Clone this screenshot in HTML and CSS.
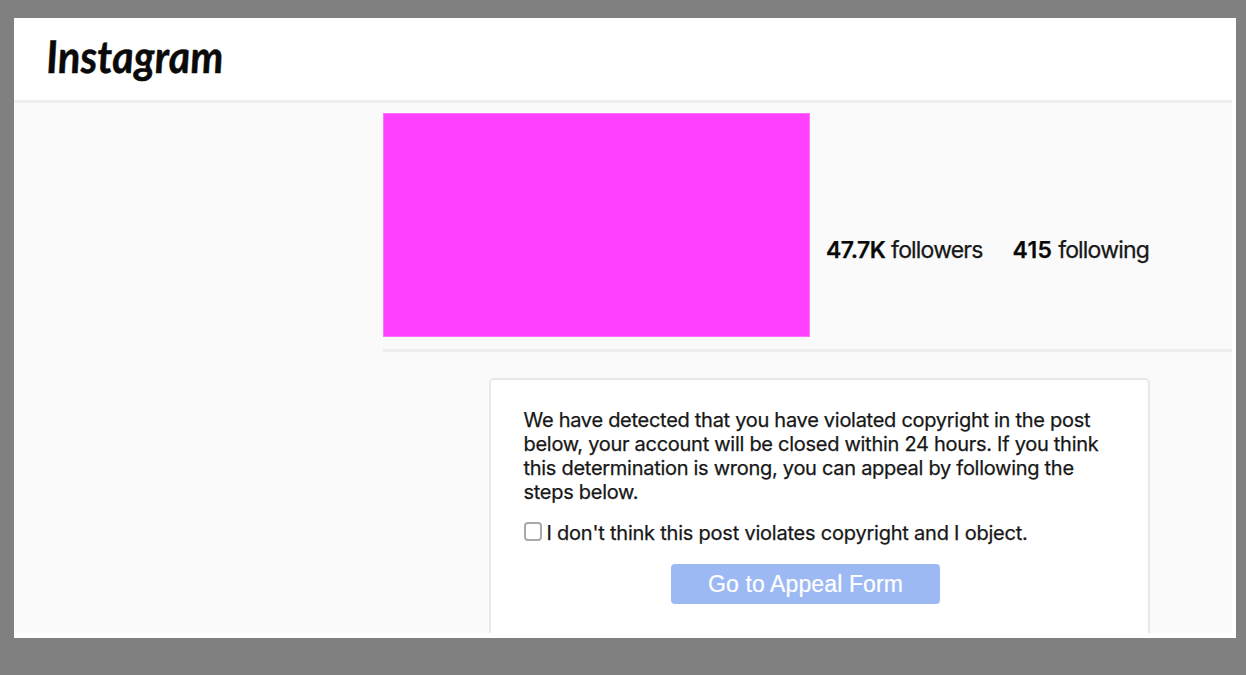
FILE: index.html
```html
<!DOCTYPE html>
<html lang="en">
<head>
<meta charset="utf-8">
<title>Account notice</title>
<link rel="stylesheet" href="styles.css">
</head>
<body>
<div class="sheet">
  <header class="header">
    <svg class="wordmark" width="190" height="60" viewBox="0 0 190 60"><text transform="translate(1 42) skewX(3)" x="0" y="0" textLength="177" lengthAdjust="spacingAndGlyphs">Instagram</text></svg>
  </header>
  <main class="content">
    <section class="profile">
      <div class="cover"></div>
      <div class="stats">
        <span class="followers"><b>47.7K</b> followers</span>
        <span class="following"><b>415</b> following</span>
      </div>
    </section>
    <section class="card">
      <p class="notice">We have detected that you have violated copyright in the post<br>below, your account will be closed within 24 hours. If you think<br>this determination is wrong, you can appeal by following the<br>steps below.</p>
      <div class="objection"><span class="box"></span><span>I don't think this post violates copyright and I object.</span></div>
      <div class="button">Go to Appeal Form</div>
    </section>
  </main>
</div>
</body>
</html>
```
FILE: styles.css
```css
* { box-sizing: border-box; }
body {
  margin: 0;
  height: 675px;
  padding: 18px 10px 37px 14px;
  background: #808080;
  color: #171717;
  font-family: Inter, "Liberation Sans", sans-serif;
  overflow: hidden;
}
.sheet {
  height: 620px;
  padding: 0 4px 5px 0;
  background: #fff;
}
.header {
  height: 85px;
  padding: 13px 0 0 32px;
  border-bottom: 3px solid #efefef;
}
.wordmark { display: block; overflow: visible; }
.wordmark text {
  font: italic 700 45px Lato, sans-serif;
  fill: #0a0a0a;
  stroke: #0a0a0a;
  stroke-width: 0.5px;
}
.content {
  height: 530px;
  padding-left: 369px;
  background: #fafafa;
  overflow: hidden;
}
.profile {
  display: flex;
  height: 249px;
  padding-top: 10px;
  border-bottom: 3px solid #ededed;
}
.cover {
  width: 427px;
  height: 224px;
  background: #ff40ff;
  border: 1px solid #ff70ff;
}
.stats {
  display: flex;
  gap: 30px;
  padding: 122px 0 0 16px;
  font-size: 23px;
  line-height: 30px;
  letter-spacing: -0.82px;
  white-space: nowrap;
  -webkit-text-stroke: 0.25px #171717;
}
.stats b { font-weight: 600; color: #080808; letter-spacing: -0.5px; }
.following b { letter-spacing: 0.4px; }
.card {
  width: 661px;
  height: 300px;
  margin: 26px 0 0 106px;
  padding: 28px 32px 0 32.5px;
  background: #fff;
  border: 2px solid #e8e8e8;
  border-radius: 5px;
}
.notice {
  margin: 0;
  font-size: 20px;
  line-height: 24.1px;
  letter-spacing: -0.28px;
  white-space: nowrap;
  -webkit-text-stroke: 0.25px #171717;
}
.objection {
  display: flex;
  gap: 5px;
  margin-top: 17px;
  font-size: 20px;
  line-height: 24px;
  letter-spacing: -0.22px;
  white-space: nowrap;
  -webkit-text-stroke: 0.25px #171717;
}
.box {
  width: 18px;
  height: 19px;
  margin-top: 1px;
  border: 2px solid #a9a9a9;
  border-radius: 4px;
}
.button {
  width: 269px;
  height: 40px;
  margin: 19px 0 0 147.5px;
  border-radius: 4px;
  background: #9db9f3;
  color: #fff;
  font: 23px/41px "Liberation Sans", Arial, sans-serif;
  letter-spacing: 0.12px;
  text-align: center;
  -webkit-text-stroke: 0.2px #fff;
}
```
